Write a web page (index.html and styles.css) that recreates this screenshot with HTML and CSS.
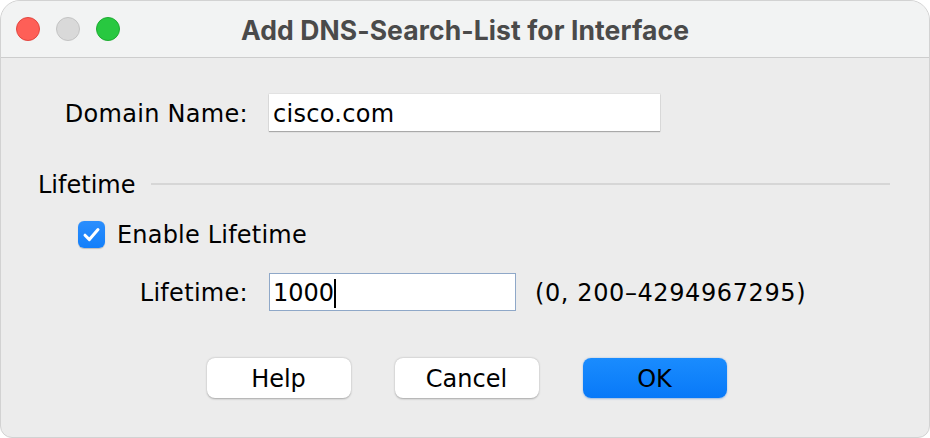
FILE: index.html
```html
<!DOCTYPE html>
<html>
<head>
<meta charset="utf-8">
<link rel="stylesheet" href="styles.css">
</head>
<body>
<div class="window">
  <div class="titlebar">
    <div class="lights">
      <span class="light red"></span>
      <span class="light gray"></span>
      <span class="light green"></span>
    </div>
    <div class="title">Add DNS-Search-List for Interface</div>
    <div></div>
  </div>
  <div class="content">
    <div class="field-row domain-row">
      <div class="field-label">Domain Name:</div>
      <div class="textfield domain-field">cisco.com</div>
    </div>
    <div class="section-head">
      <span class="section-title">Lifetime</span>
      <span class="section-line"></span>
    </div>
    <div class="check-row">
      <span class="checkbox">
        <svg width="27" height="27" viewBox="0 0 27 27"><path d="M7 14.2 L11.4 18.6 L20 8.6" fill="none" stroke="#fff" stroke-width="3" stroke-linecap="round" stroke-linejoin="round"/></svg>
      </span>
      <span class="check-label">Enable Lifetime</span>
    </div>
    <div class="field-row lifetime-row">
      <div class="field-label">Lifetime:</div>
      <div class="textfield lifetime-field focused">1000<span class="caret"></span></div>
      <div class="hint">(0, 200–4294967295)</div>
    </div>
    <div class="buttons">
      <div class="btn">Help</div>
      <div class="btn">Cancel</div>
      <div class="btn primary">OK</div>
    </div>
  </div>
</div>
</body>
</html>
```

FILE: styles.css
```css
html, body {
  margin: 0;
  padding: 0;
  background: #ffffff;
}
.window {
  width: 930px;
  height: 438px;
  box-sizing: border-box;
  background: #ececec;
  border-radius: 20px 20px 12px 12px;
  border: 1px solid #d2d2d2;
  overflow: hidden;
  font-family: "DejaVu Sans", "Liberation Sans", sans-serif;
  color: #000;
}
.titlebar {
  height: 56px;
  background: #f2f3f3;
  border-bottom: 1px solid #cdcdcd;
  display: grid;
  grid-template-columns: 1fr auto 1fr;
  align-items: center;
}
.lights {
  display: flex;
  gap: 16px;
  padding-left: 15px;
}
.light {
  width: 24px;
  height: 24px;
  border-radius: 50%;
  box-sizing: border-box;
}
.red { background: #fe5f57; border: 1px solid #e2463f; }
.gray { background: #d9d9d9; border: 1px solid #c3c3c3; }
.green { background: #28c840; border: 1px solid #1eab31; }
.title {
  font-family: "Inter", "Liberation Sans", sans-serif;
  font-weight: 700;
  font-size: 26.5px;
  color: #4a4a4a;
  letter-spacing: 0.1px;
  padding-top: 1px;
}
.content {
  display: flex;
  flex-direction: column;
}
.field-row {
  display: flex;
  align-items: center;
}
.field-label {
  width: 247px;
  text-align: right;
  margin-right: 21px;
  font-size: 24px;
  line-height: 30px;
  letter-spacing: 0.3px;
  padding-top: 2px;
}
.textfield {
  background: #fff;
  box-sizing: border-box;
  font-size: 24px;
  line-height: 30px;
  padding: 3px 4px 1px;
  display: flex;
  align-items: center;
}
.domain-row {
  margin-top: 36px;
  height: 37px;
}
.domain-field {
  width: 391px;
  height: 37px;
  box-shadow: 0 1px 1px rgba(0,0,0,0.25), 0 0 0 0.5px rgba(0,0,0,0.08);
  letter-spacing: 0.3px;
}
.section-head {
  margin-top: 38px;
  height: 30px;
  display: flex;
  align-items: center;
  padding: 0 39px 0 37px;
}
.section-title {
  font-size: 24px;
  line-height: 30px;
  padding-top: 2px;
}
.section-line {
  flex: 1;
  height: 2px;
  background: #d6d6d6;
  margin-left: 16px;
}
.check-row {
  margin-top: 21px;
  height: 28px;
  display: flex;
  align-items: center;
  padding-left: 77px;
}
.checkbox {
  width: 27px;
  height: 27px;
  border-radius: 6px;
  background: linear-gradient(#2b8efd, #137ffa);
  box-shadow: 0 0.5px 1px rgba(0,0,0,0.2);
  display: flex;
}
.check-label {
  margin-left: 12px;
  font-size: 24px;
  line-height: 30px;
  letter-spacing: 0.2px;
  padding-top: 2px;
}
.lifetime-row {
  margin-top: 25px;
  height: 38px;
}
.lifetime-field {
  width: 247px;
  height: 38px;
  border: 1px solid #8fa8c8;
  padding: 2px 3px 0;
}
.caret {
  display: inline-block;
  width: 2px;
  height: 29px;
  background: #000;
}
.hint {
  margin-left: 19px;
  font-size: 24px;
  line-height: 30px;
  letter-spacing: 0.6px;
  padding-top: 2px;
}
.buttons {
  margin-top: 47px;
  display: flex;
  justify-content: center;
  gap: 44px;
  padding-left: 3px;
}
.btn {
  width: 144px;
  height: 40px;
  box-sizing: border-box;
  border-radius: 8px;
  background: #fff;
  box-shadow: 0 0.5px 2px rgba(0,0,0,0.3);
  font-size: 24px;
  line-height: 40px;
  padding-top: 1px;
  text-align: center;
}
.btn.primary {
  background: linear-gradient(#1a8cfe, #0879f8);
  box-shadow: 0 0.5px 2px rgba(0,90,200,0.35);
}
```
